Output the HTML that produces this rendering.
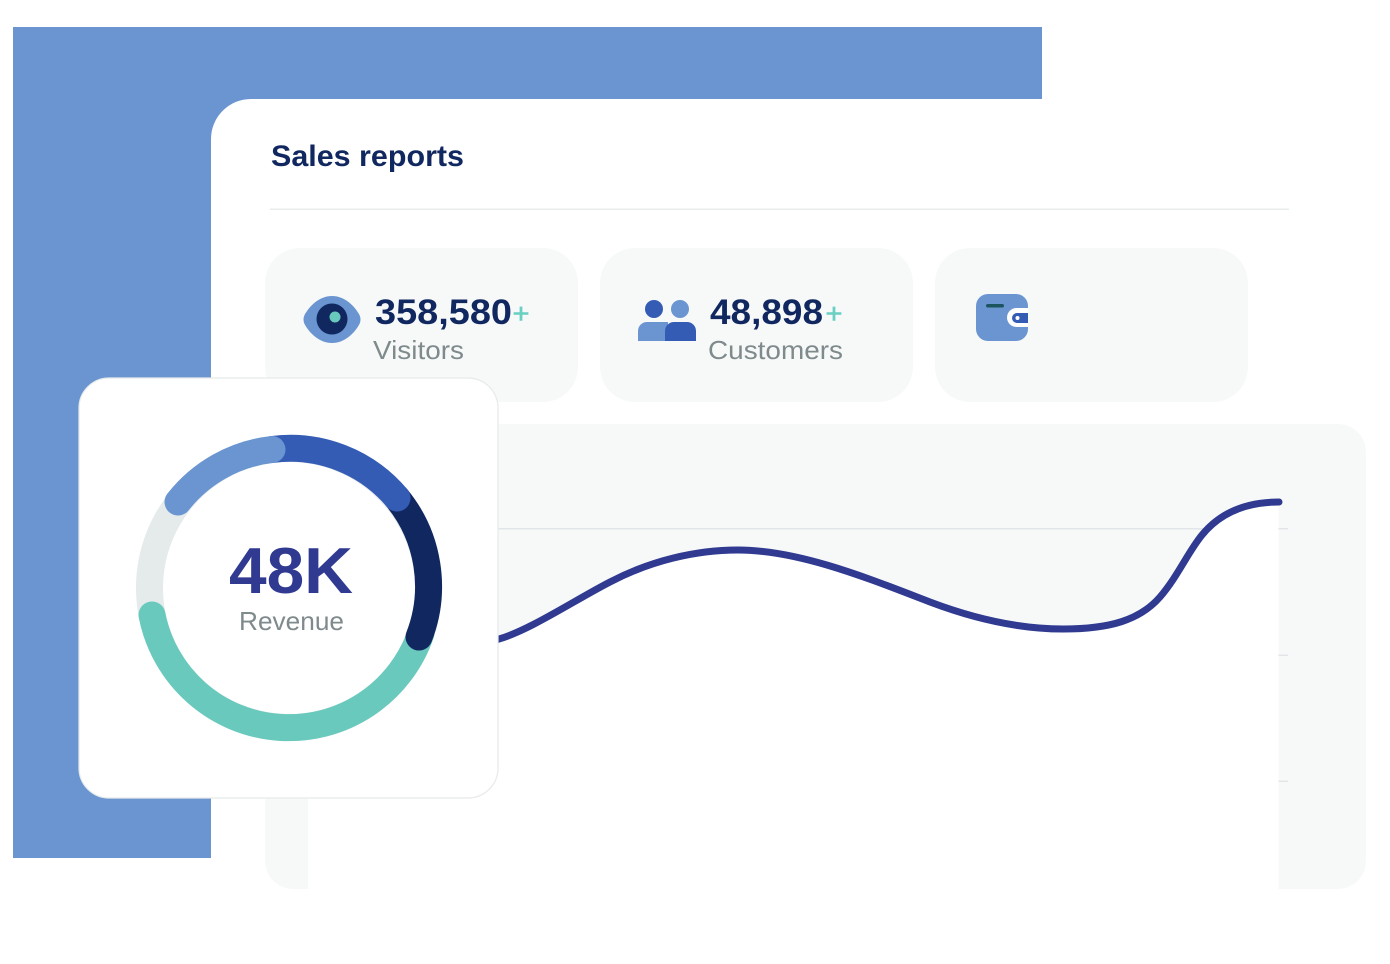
<!DOCTYPE html>
<html>
<head>
<meta charset="utf-8">
<title>Sales reports</title>
<style>
html,body{margin:0;padding:0;background:#fff;}
body{width:1390px;height:964px;overflow:hidden;}
svg{display:block;}
text{font-family:"Liberation Sans",sans-serif;}
</style>
</head>
<body>
<svg width="1390" height="964" viewBox="0 0 1390 964" xmlns="http://www.w3.org/2000/svg">
  <rect width="1390" height="964" fill="#fff"/>
  <rect x="13" y="27" width="1029" height="831" fill="#6a95d1"/>
  <path d="M211 964V139a40 40 0 0 1 40-40H1390V964Z" fill="#fff"/>

  <text x="271" y="166" font-size="30" font-weight="700" fill="#10275f" textLength="193" lengthAdjust="spacingAndGlyphs">Sales reports</text>
  <rect x="270" y="208.5" width="1019" height="1.5" fill="#e8ecec"/>

  <rect x="265" y="248" width="313" height="154" rx="35" fill="#f7f9f9"/>
  <rect x="600" y="248" width="313" height="154" rx="35" fill="#f7f9f9"/>
  <rect x="935" y="248" width="313" height="154" rx="35" fill="#f7f9f9"/>

  <!-- eye -->
  <path d="M304.500 315C310 305 320 296 332 296C344 296 354 305 359.500 315Q361.500 319.500 359.500 324C354 334 344 343 332 343C320 343 310 334 304.500 324Q302.500 319.500 304.500 315Z" fill="#6a95d1"/>
  <circle cx="332" cy="319" r="15.5" fill="#10275f"/>
  <circle cx="335" cy="317" r="5.5" fill="#69c9bd"/>
  <text x="375" y="324" font-size="35" font-weight="700" fill="#10275f" textLength="137" lengthAdjust="spacingAndGlyphs">358,580</text>
  <text x="512.500" y="323" font-size="28" fill="#69d0c2" stroke="#69d0c2" stroke-width="0.600" textLength="17" lengthAdjust="spacingAndGlyphs">+</text>
  <text x="373" y="359" font-size="26" fill="#7f8a8c" textLength="91" lengthAdjust="spacingAndGlyphs">Visitors</text>

  <!-- people -->
  <circle cx="654" cy="309" r="9" fill="#355cb5"/>
  <circle cx="680" cy="309" r="9" fill="#6a95d1"/>
  <path d="M638 341V331a9 9 0 0 1 9-9H668V341Z" fill="#6a95d1"/>
  <path d="M665 341V331a9 9 0 0 1 9-9H687a9 9 0 0 1 9 9V341Z" fill="#355cb5"/>
  <text x="710" y="324" font-size="35" font-weight="700" fill="#10275f" textLength="113" lengthAdjust="spacingAndGlyphs">48,898</text>
  <text x="825.500" y="323" font-size="28" fill="#69d0c2" stroke="#69d0c2" stroke-width="0.600" textLength="17" lengthAdjust="spacingAndGlyphs">+</text>
  <text x="708" y="359" font-size="26" fill="#7f8a8c" textLength="135" lengthAdjust="spacingAndGlyphs">Customers</text>

  <!-- wallet -->
  <rect x="976" y="294" width="52" height="47" rx="12" fill="#6a95d1"/>
  <path d="M1028 308H1016.5a9.500 9.500 0 0 0 0 19H1028Z" fill="#fff"/>
  <path d="M1028 313H1017a5 5 0 0 0 0 10H1028Z" fill="#355cb5"/>
  <circle cx="1017.500" cy="318" r="2" fill="#fff"/>
  <rect x="986" y="304" width="18" height="3.500" rx="1.750" fill="#1c5560"/>

  <!-- chart -->
  <rect x="265" y="424" width="1101" height="465" rx="28" fill="#f7f9f9"/>
  <rect x="480" y="528" width="808" height="1.500" fill="#e3e6e8"/>
  <rect x="1278" y="654.500" width="10" height="1.500" fill="#e3e6e8"/>
  <rect x="1278" y="780.500" width="10" height="1.500" fill="#e3e6e8"/>
  <path d="M308 889V700L470 650L499 639C530 630 575 600 610 582C650 561 695 550 738 550C800 550 870 579 930 602C975 619 1020 629 1063 629C1110 629 1140 620 1160 597C1178 576 1188 552 1202 535C1220 513 1245 502 1278.500 502V889Z" fill="#fff"/>
  <path d="M470 650L499 639C530 630 575 600 610 582C650 561 695 550 738 550C800 550 870 579 930 602C975 619 1020 629 1063 629C1110 629 1140 620 1160 597C1178 576 1188 552 1202 535C1220 513 1245 502 1279 502" fill="none" stroke="#2f3a90" stroke-width="7" stroke-linecap="round"/>

  <!-- revenue card -->
  <rect x="79" y="378" width="419" height="420" rx="30" fill="#fff" stroke="#e6eaea" stroke-width="1.200"/>
  <circle cx="289" cy="588" r="139.500" fill="none" stroke="#e5eaeb" stroke-width="27"/>
  <path d="M152 615A139.500 139.500 0 0 0 421 633" fill="none" stroke="#69c9bd" stroke-width="27" stroke-linecap="round"/>
  <path d="M397 498A139.500 139.500 0 0 1 419 637" fill="none" stroke="#10275f" stroke-width="27" stroke-linecap="round"/>
  <path d="M272 449.500A139.500 139.500 0 0 1 397 498" fill="none" stroke="#355cb5" stroke-width="27" stroke-linecap="round"/>
  <path d="M178 502A139.500 139.500 0 0 1 272 449.500" fill="none" stroke="#6a95d1" stroke-width="27" stroke-linecap="round"/>
  <text x="229" y="593" font-size="65" font-weight="700" fill="#2f3a90" textLength="124" lengthAdjust="spacingAndGlyphs">48K</text>
  <text x="239" y="630" font-size="26" fill="#7f8a8c" textLength="105" lengthAdjust="spacingAndGlyphs">Revenue</text>
</svg>
</body>
</html>
